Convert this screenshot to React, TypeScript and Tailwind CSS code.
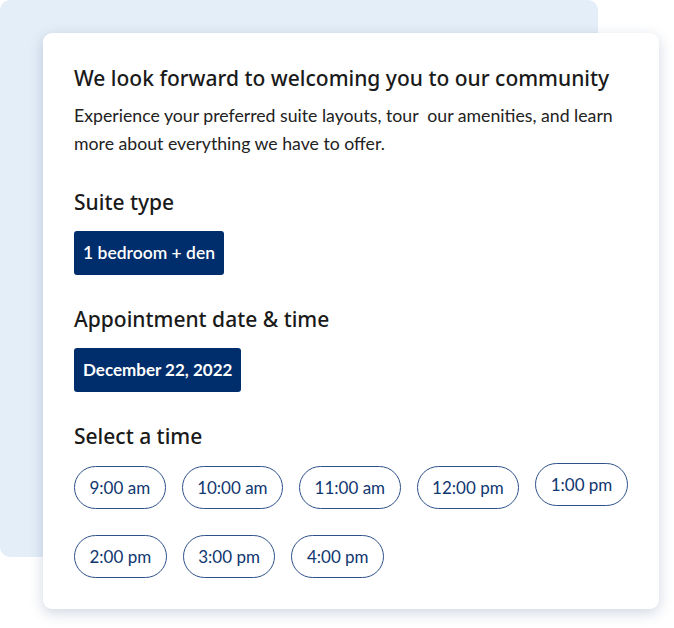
import React from "react";

const firstRow = ["9:00 am", "10:00 am", "11:00 am", "12:00 pm", "1:00 pm"];
const secondRow = ["2:00 pm", "3:00 pm", "4:00 pm"];

const heading = "font-['Noto_Sans',sans-serif] font-medium text-[21px] leading-[28px] text-[#1a1a1a]";

const TimePill = ({ label, raised }: { label: string; raised?: boolean }) => (
  <button
    className={
      "h-[43px] shrink-0 whitespace-nowrap rounded-full border border-[#2d5189] px-[14.5px] text-[17px] text-[#0f3770] " +
      (raised ? "-mt-[3px]" : "")
    }
  >
    {label}
  </button>
);

const App = () => {
  return (
    <div className="relative w-[674px] h-[628px] bg-white font-['Lato',sans-serif]">
      {/* light blue panel behind the card */}
      <div className="absolute left-0 top-0 w-[598px] h-[557px] rounded-[10px] bg-[#e4eef8]" />

      <div className="relative ml-[43px] pt-[33px]">
        <div className="w-[616px] h-[576px] rounded-[9px] bg-white px-[31px] pt-[31px] shadow-[0_4px_14px_rgba(40,70,120,0.22)]">
          <h1 className={heading}>
            We look forward to welcoming you to our community
          </h1>
          <p className="mt-[10px] text-[17.7px] leading-[28px] text-[#222]">
            Experience your preferred suite layouts, tour&nbsp; our amenities, and learn
            more about everything we have to offer.
          </p>

          <h2 className={heading + " mt-[30px]"}>Suite type</h2>
          <div className="mt-[15px] inline-flex h-[44px] items-center rounded-[3px] bg-[#002d6b] px-[9px] text-[17.5px] font-semibold text-white">
            1 bedroom + den
          </div>

          <h2 className={heading + " mt-[30px]"}>Appointment date &amp; time</h2>
          <div className="mt-[15px] inline-flex h-[44px] items-center rounded-[3px] bg-[#002d6b] px-[9px] text-[17px] font-bold text-white">
            December 22, 2022
          </div>

          <h2 className={heading + " mt-[30px]"}>Select a time</h2>
          <div className="mt-[16px] flex flex-col gap-[26px]">
            <div className="flex items-start gap-[16px]">
              {firstRow.map((t, i) => (
                <TimePill key={t} label={t} raised={i === 4} />
              ))}
            </div>
            <div className="flex items-start gap-[16px]">
              {secondRow.map((t) => (
                <TimePill key={t} label={t} />
              ))}
            </div>
          </div>
        </div>
      </div>
    </div>
  );
};

export default App;
